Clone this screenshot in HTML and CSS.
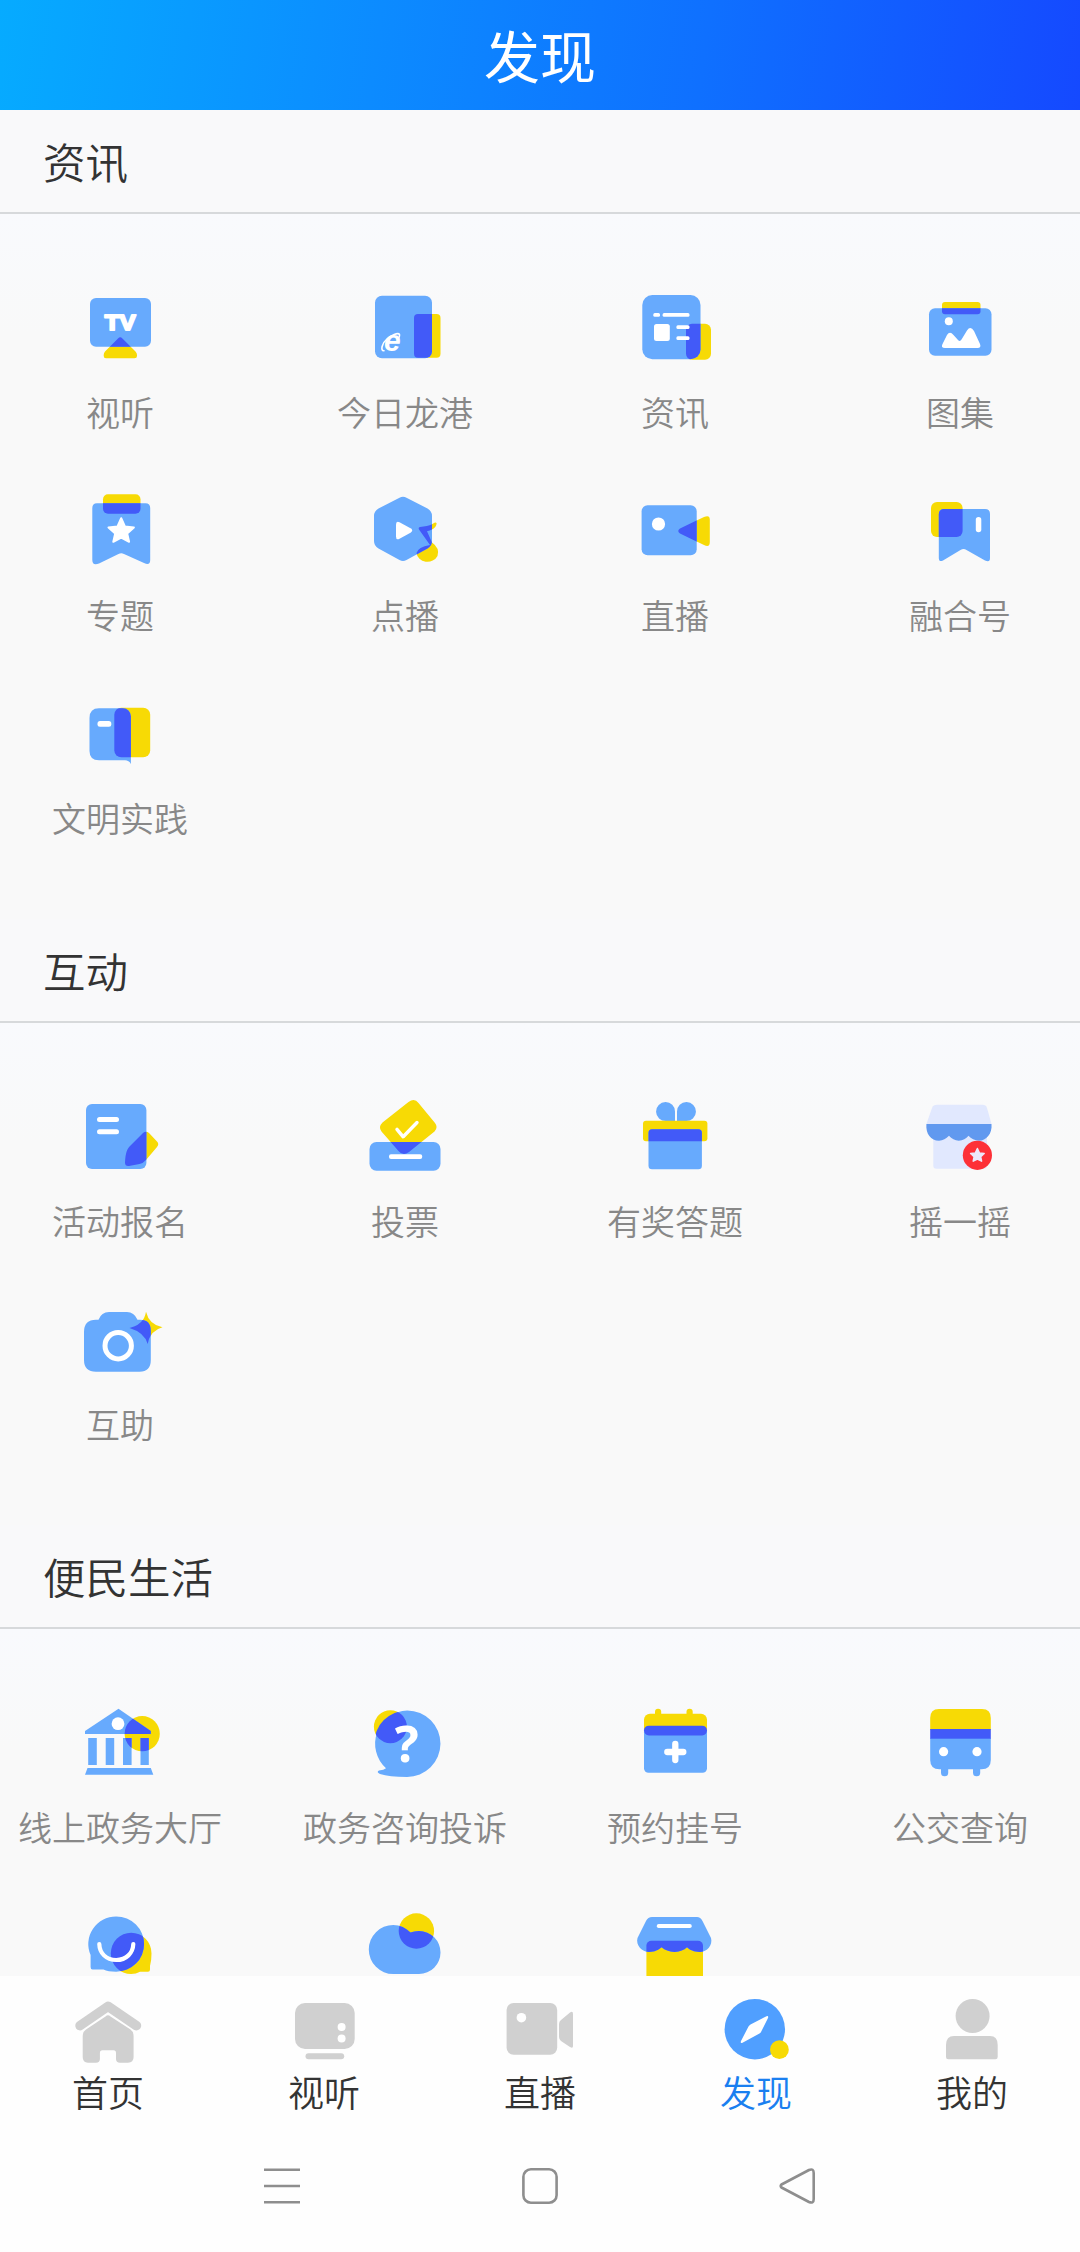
FILE: index.html
```html
<!DOCTYPE html>
<html lang="zh-CN">
<head>
<meta charset="utf-8">
<title>发现</title>
<link rel="stylesheet" href="styles.css">
</head>
<body>
<div class="app">
  <header class="header"><h1 class="header-title">发现</h1></header>

  <main class="content">
    <section class="section">
      <h2 class="section-title">资讯</h2>
      <div class="grid">
        <a class="item">
          <svg class="icon" viewBox="0 0 90 90">
            <clipPath id="c-tv"><rect x="15" y="15" width="61" height="48.7" rx="6"/></clipPath>
            <path class="y" d="M43 55.500Q45.200 53 47.400 55.500L60.500 68.500Q62 70 62 72V73Q62 75.300 59.500 75.300H31Q28.700 75.300 28.700 73V72Q28.700 70 30 68.500Z"/>
            <rect class="b" x="15" y="15" width="61" height="48.700" rx="6"/>
            <path class="d" clip-path="url(#c-tv)" d="M43 55.500Q45.200 53 47.400 55.500L60.500 68.500H30Z"/>
            <text class="tv-text" x="45.300" y="46.800" textLength="31" lengthAdjust="spacingAndGlyphs">TV</text>
          </svg>
          <span class="label">视听</span>
        </a>
        <a class="item">
          <svg class="icon" viewBox="0 0 90 90">
            <clipPath id="c-day"><rect x="15" y="12.700" width="57" height="62.600" rx="7"/></clipPath>
            <rect class="y" x="54" y="31" width="26.500" height="43.700" rx="4"/>
            <rect class="b" x="15" y="12.700" width="57" height="62.600" rx="7"/>
            <rect class="d" clip-path="url(#c-day)" x="54" y="31" width="26.500" height="43.700" rx="4"/>
            <text class="e-text" x="32.300" y="67.800">e</text>
            <path class="w-line thin" d="M24 67.800C20 68 22 60 27 56C31 52.500 38 49 39.500 51.500Q40 53 38.500 55.500"/>
          </svg>
          <span class="label">今日龙港</span>
        </a>
        <a class="item">
          <svg class="icon" viewBox="0 0 90 90">
            <clipPath id="c-news"><rect x="12.300" y="12" width="58.200" height="64.300" rx="10"/></clipPath>
            <rect class="y" x="56" y="40.700" width="25" height="36" rx="6"/>
            <rect class="b" x="12.300" y="12" width="58.200" height="64.300" rx="10"/>
            <rect class="d" clip-path="url(#c-news)" x="56" y="40.700" width="25" height="36" rx="6"/>
            <rect class="w" x="23.300" y="30" width="6.700" height="3.700" rx="1.500"/>
            <rect class="w" x="32.600" y="30" width="26.900" height="3.700" rx="1.500"/>
            <rect class="w" x="24" y="41" width="15.800" height="17" rx="2.500"/>
            <rect class="w" x="46.400" y="42.300" width="13.100" height="3.700" rx="1.500"/>
            <rect class="w" x="46.400" y="53.200" width="13.100" height="3.700" rx="1.500"/>
          </svg>
          <span class="label">资讯</span>
        </a>
        <a class="item">
          <svg class="icon" viewBox="0 0 90 90">
            <clipPath id="c-pic"><rect x="14" y="25.300" width="62.500" height="47.400" rx="6"/></clipPath>
            <rect class="y" x="27" y="19" width="38.500" height="12.300" rx="3"/>
            <rect class="b" x="14" y="25.300" width="62.500" height="47.400" rx="6"/>
            <rect class="d" clip-path="url(#c-pic)" x="27" y="19" width="38.500" height="12.300" rx="3"/>
            <circle class="w" cx="33.800" cy="38.300" r="4"/>
            <path class="w" d="M30 65Q25.500 65 27.500 61L32 52Q34.800 47.500 38.500 52L43 57Q45 59 46.500 56.500L52 47.500Q55.500 42.500 59 48L65 61Q66.500 65 62.500 65Z"/>
          </svg>
          <span class="label">图集</span>
        </a>
        <a class="item">
          <svg class="icon" viewBox="0 0 90 90">
            <clipPath id="c-topic"><rect x="17.300" y="17.300" width="57.900" height="60" rx="5"/></clipPath>
            <rect class="y" x="28" y="8.300" width="37.500" height="19.400" rx="5"/>
            <path class="b" d="M22 17.300H70.500Q75.200 17.300 75.200 22V74Q75.200 80 69 77L49 68Q46.200 66.500 43.500 68L24 77.500Q17.300 80 17.300 74V22Q17.300 17.300 22 17.300Z"/>
            <rect class="d" clip-path="url(#c-topic)" x="28" y="8.300" width="37.500" height="19.400" rx="5"/>
            <path class="w round" d="M46.200 32.200L49.900 40.500L58.900 41.400L52.200 47.500L54.100 55.800L46.200 51.600L38.300 55.800L40.200 47.500L33.500 41.400L42.500 40.500Z"/>
          </svg>
          <span class="label">专题</span>
        </a>
        <a class="item">
          <svg class="icon" viewBox="0 0 90 90">
            <clipPath id="c-hex"><path d="M39.500 11.700Q43 9.700 46.500 11.700L67.500 22.500Q72 25 72 30V55Q72 60 67.500 62.500L46.500 74Q43 76 39.500 74L18.500 62.500Q14 60 14 55V30Q14 25 18.500 22.500Z"/></clipPath>
            <path class="y" d="M60 41Q70 40 74.500 36.800Q77.500 35.500 76.300 39Q75 43.500 67 45.300L72 56.500Q80 62 77.500 70A11 9.700 0 0 1 56.500 67Q58 61 70 59L59 43.500Q58 41.500 60 41Z"/>
            <path class="b" d="M39.500 11.700Q43 9.700 46.500 11.700L67.500 22.500Q72 25 72 30V55Q72 60 67.500 62.500L46.500 74Q43 76 39.500 74L18.500 62.500Q14 60 14 55V30Q14 25 18.500 22.500Z"/>
            <path class="d" clip-path="url(#c-hex)" d="M60 41Q70 40 74.500 36.800Q77.500 35.500 76.300 39Q75 43.500 67 45.300L72 56.500Q80 62 77.500 70A11 9.700 0 0 1 56.500 67Q58 61 70 59L59 43.500Q58 41.500 60 41Z"/>
            <path class="w" d="M36 38.500Q36 34.500 39.500 36.200L50.500 42.300Q54 44.500 50.500 46.700L39.500 52.800Q36 54.500 36 50.500Z"/>
          </svg>
          <span class="label">点播</span>
        </a>
        <a class="item">
          <svg class="icon" viewBox="0 0 90 90">
            <clipPath id="c-live"><rect x="11.600" y="19.300" width="55.100" height="50" rx="6"/></clipPath>
            <path class="y" d="M50 42.500L74 31Q79.800 28.500 79.800 33.500V56Q79.800 62 74 59L50 47.500Q46.500 45 50 42.500Z"/>
            <rect class="b" x="11.600" y="19.300" width="55.100" height="50" rx="6"/>
            <path class="d" clip-path="url(#c-live)" d="M50 42.500L74 31Q79.800 28.500 79.800 33.500V56Q79.800 62 74 59L50 47.500Q46.500 45 50 42.500Z"/>
            <circle class="w" cx="28.500" cy="38" r="6.600"/>
          </svg>
          <span class="label">直播</span>
        </a>
        <a class="item">
          <svg class="icon" viewBox="0 0 90 90">
            <clipPath id="c-merge"><rect x="23.800" y="23" width="51.200" height="52" rx="5"/></clipPath>
            <rect class="y" x="16" y="16" width="31.600" height="35" rx="6"/>
            <path class="b" d="M29 23H70Q75 23 75 28V72Q75 77 70 74.500L51.500 64Q48.600 62 45.500 64L28 74.500Q23.800 76.500 23.800 72V28Q23.800 23 29 23Z"/>
            <rect class="d" clip-path="url(#c-merge)" x="16" y="16" width="31.600" height="35" rx="6"/>
            <rect class="w" x="60.800" y="31" width="5.500" height="15.300" rx="2.700"/>
          </svg>
          <span class="label">融合号</span>
        </a>
        <a class="item">
          <svg class="icon" viewBox="0 0 90 90">
            <clipPath id="c-book"><rect x="14.500" y="19.300" width="41.400" height="56" rx="8"/></clipPath>
            <rect class="y" x="39.300" y="18.700" width="35.900" height="49.600" rx="7"/>
            <path class="b" d="M24 19.300H47Q55.900 19.300 55.900 28V75Q54 71.300 50 71.300H24Q14.500 71.300 14.500 62V29Q14.500 19.300 24 19.300Z"/>
            <rect class="d" clip-path="url(#c-book)" x="39.300" y="18.700" width="35.900" height="49.600" rx="7"/>
            <rect class="w" x="22.500" y="32" width="13.800" height="5.700" rx="2.500"/>
          </svg>
          <span class="label">文明实践</span>
        </a>
      </div>
    </section>

    <section class="section">
      <h2 class="section-title">互动</h2>
      <div class="grid">
        <a class="item">
          <svg class="icon" viewBox="0 0 90 90">
            <clipPath id="c-act"><rect x="11" y="12" width="60.400" height="65" rx="6"/></clipPath>
            <path class="y" d="M68 41Q71 38.500 74 41L82 49.500Q84.500 52 82 55L71 68Q68.500 71 64.500 72L54 74Q50 74.500 50 70.500C50.500 61 52 57 55 54Z"/>
            <rect class="b" x="11" y="12" width="60.400" height="65" rx="6"/>
            <path class="d" clip-path="url(#c-act)" d="M68 41Q71 38.500 74 41L82 49.500Q84.500 52 82 55L71 68Q68.500 71 64.500 72L54 74Q50 74.500 50 70.500C50.500 61 52 57 55 54Z"/>
            <rect class="w" x="22" y="25" width="22" height="5" rx="2.500"/>
            <rect class="w" x="22" y="37.300" width="22" height="5" rx="2.500"/>
          </svg>
          <span class="label">活动报名</span>
        </a>
        <a class="item">
          <svg class="icon" viewBox="0 0 90 90">
            <clipPath id="c-vote"><rect x="9.500" y="50" width="71" height="28.700" rx="7"/></clipPath>
            <path class="y" d="M48.500 10Q54.500 5.500 58.500 11L75 31Q78.500 35.500 74.500 39.500L49 60Q43 64.500 38.500 59L21.500 39.500Q18 35 22.500 30.500Z"/>
            <rect class="b" x="9.500" y="50" width="71" height="28.700" rx="7"/>
            <path class="d" clip-path="url(#c-vote)" d="M48.500 10Q54.500 5.500 58.500 11L75 31Q78.500 35.500 74.500 39.500L49 60Q43 64.500 38.500 59L21.500 39.500Q18 35 22.500 30.500Z"/>
            <path class="w-line check" d="M37 37.300L43.200 44.800L57 30.500"/>
            <rect class="w" x="29" y="62.300" width="33.200" height="4.700" rx="2"/>
          </svg>
          <span class="label">投票</span>
        </a>
        <a class="item">
          <svg class="icon" viewBox="0 0 90 90">
            <path class="b" d="M35.500 10A9.400 9.400 0 0 1 45 19.500V29H36A9.700 9.500 0 0 1 35.500 10Z"/>
            <path class="b" d="M56.500 10A9.400 9.400 0 0 0 47 19.500V29H56A9.700 9.500 0 0 0 56.500 10Z"/>
            <rect class="y" x="13" y="28.800" width="64.400" height="20.500" rx="3"/>
            <rect class="b" x="18.500" y="37.300" width="53.400" height="40" rx="3.500"/>
            <path class="d" d="M18.500 49.300V41Q18.500 37.300 22 37.300H68.400Q71.900 37.300 71.900 41V49.300Z"/>
          </svg>
          <span class="label">有奖答题</span>
        </a>
        <a class="item">
          <svg class="icon" viewBox="0 0 90 90">
            <rect class="pale" x="18.300" y="40" width="53.700" height="36.700" rx="3"/>
            <path class="pale" d="M22 12.700H67.500Q71 12.700 72 16L76.500 32H11.400L17 16Q18.200 12.700 22 12.700Z"/>
            <path class="awning" d="M11.400 32H76.500C77.500 42 71 48.700 64 48.700C60 48.700 56 46.500 53.500 43.800C51 46.500 48 48.700 43.800 48.700C40 48.700 36.500 46.500 34 43.800C31 46.500 28 48.700 24 48.700C16 48.700 10.500 42 11.400 32Z"/>
            <circle class="badge" cx="62.400" cy="63.300" r="14.600"/>
            <path class="star-pale" d="M62.400 56.500L64.500 61L69.200 61.500L65.700 64.800L66.600 69.200L62.400 67L58.200 69.200L59.100 64.800L55.600 61.500L60.300 61Z"/>
          </svg>
          <span class="label">摇一摇</span>
        </a>
        <a class="item">
          <svg class="icon" viewBox="0 0 90 90">
            <clipPath id="c-cam"><path d="M21 24.700H65Q75.800 24.700 75.800 36V76.700H9V37Q9 24.700 21 24.700Z"/></clipPath>
            <path class="y" d="M71 16.700Q74 29.500 87.500 32.300Q75 35.500 72.700 49Q69.500 37.500 54.500 33Q69 29.500 71 16.700Z"/>
            <path class="b" d="M21 24.700H23.500Q26.500 17 34 17H52Q59 17 62.500 24.700H65Q75.800 24.700 75.800 36V65Q75.800 76.700 64.500 76.700H21Q9 76.700 9 65V37Q9 24.700 21 24.700Z"/>
            <path class="d" clip-path="url(#c-cam)" d="M71 16.700Q74 29.500 87.500 32.300Q75 35.500 72.700 49Q69.500 37.500 54.500 33Q69 29.500 71 16.700Z"/>
            <circle class="w-line ring" cx="43.200" cy="50.700" r="13.200"/>
          </svg>
          <span class="label">互助</span>
        </a>
      </div>
    </section>

    <section class="section">
      <h2 class="section-title">便民生活</h2>
      <div class="grid">
        <a class="item">
          <svg class="icon" viewBox="0 0 90 90">
            <clipPath id="c-hall"><circle cx="67.200" cy="35.700" r="17.600"/></clipPath>
            <circle class="y" cx="67.200" cy="35.700" r="17.600"/>
            <path class="b" d="M43.500 10.700L75.800 33V36H10V33ZM13.200 40h8.600v27h-8.600ZM30.700 40h8.500v27h-8.500ZM48 40h8.600v27h-8.600ZM65.500 40h8.300v27h-8.300ZM12.500 70H75.800L78.300 76.700H10Z"/>
            <path class="d" clip-path="url(#c-hall)" d="M43.500 10.700L75.800 33V36H10V33ZM48 40h8.600v27h-8.600ZM65.500 40h8.300v27h-8.300Z"/>
            <circle class="w" cx="43" cy="25.700" r="6.400"/>
          </svg>
          <span class="label">线上政务大厅</span>
        </a>
        <a class="item">
          <svg class="icon" viewBox="0 0 90 90">
            <clipPath id="c-ask"><circle cx="47.300" cy="45.600" r="33.200"/></clipPath>
            <circle class="y" cx="30.400" cy="28.700" r="16.500"/>
            <path class="b" d="M47.300 12.400A33.300 33.300 0 1 1 47 79Q29 79 20 76Q16 74 19 72.500Q24 72 26 70.300A33.300 33.300 0 0 1 47.300 12.400Z"/>
            <circle class="d" clip-path="url(#c-ask)" cx="30.400" cy="28.700" r="16.500"/>
            <text class="q-text" x="46.800" y="64">?</text>
          </svg>
          <span class="label">政务咨询投诉</span>
        </a>
        <a class="item">
          <svg class="icon" viewBox="0 0 90 90">
            <rect class="y" x="25" y="10.700" width="6.200" height="9" rx="3"/>
            <rect class="y" x="56.500" y="10.700" width="6.200" height="9" rx="3"/>
            <rect class="y" x="14" y="15.700" width="63" height="21" rx="6"/>
            <rect class="b" x="14" y="30" width="63" height="44.700" rx="4.500"/>
            <rect class="d" x="14" y="27.700" width="63" height="9.700" rx="4.800"/>
            <path class="w-line plus" d="M45.300 46V62M37.300 54H53.300"/>
          </svg>
          <span class="label">预约挂号</span>
        </a>
        <a class="item">
          <svg class="icon" viewBox="0 0 90 90">
            <rect class="b" x="26" y="66" width="7.200" height="12.300" rx="3.500"/>
            <rect class="b" x="58" y="66" width="7.200" height="12.300" rx="3.500"/>
            <path class="y" d="M15.200 32V20Q15.200 11 24 11H67Q75.800 11 75.800 20V32Z"/>
            <path class="b" d="M15.200 40V62Q15.200 71.300 24.500 71.300H66.500Q75.800 71.300 75.800 62V40Z"/>
            <rect class="d" x="15.200" y="31" width="60.600" height="9.700"/>
            <circle class="w" cx="28.600" cy="53.700" r="4.600"/>
            <circle class="w" cx="62" cy="53.700" r="4.600"/>
          </svg>
          <span class="label">公交查询</span>
        </a>
        <a class="item">
          <svg class="icon" viewBox="0 0 90 90">
            <clipPath id="c-smile"><path d="M41.200 15.500A27.800 27.500 0 0 1 41.200 70.700Q33 70.700 28.500 68.500H17.500Q15.600 68.500 15.600 66V54A27.800 27.500 0 0 1 41.200 15.500Z"/></clipPath>
            <path class="y" d="M56.200 31.700A20.400 20.700 0 0 1 76.500 52.500Q76.500 60 75 65V68.500Q75 70.700 73 70.700H65Q61 73 56.200 73A20.600 20.600 0 0 1 56.200 31.700Z"/>
            <path class="b" d="M41.200 15.500A27.800 27.500 0 0 1 41.200 70.700Q33 70.700 28.500 68.500H17.500Q15.600 68.500 15.600 66V54A27.800 27.500 0 0 1 41.200 15.500Z"/>
            <ellipse class="d" clip-path="url(#c-smile)" cx="56.200" cy="52.400" rx="20.400" ry="20.700"/>
            <path class="w-line smile" d="M24.300 43C24.500 52 31 59 41.200 59S58 52 58.300 43"/>
          </svg>
        </a>
        <a class="item">
          <svg class="icon" viewBox="0 0 90 90">
            <clipPath id="c-cloud"><path d="M33.300 24C40 24 46 27 50.500 31.500Q54 30 59 30A21.500 21.500 0 0 1 59 73H33.300A24.500 24.500 0 0 1 33.300 24Z"/></clipPath>
            <circle class="y" cx="56.400" cy="30" r="17.700"/>
            <path class="b" d="M33.300 24C40 24 46 27 50.500 31.500Q54 30 59 30A21.500 21.500 0 0 1 59 73H33.300A24.500 24.500 0 0 1 33.300 24Z"/>
            <circle class="d" clip-path="url(#c-cloud)" cx="56.400" cy="30" r="17.700"/>
          </svg>
        </a>
        <a class="item">
          <svg class="icon" viewBox="0 0 90 90">
            <clipPath id="c-shop"><rect x="16.400" y="39.700" width="56.600" height="45" rx="5"/></clipPath>
            <rect class="y" x="16.400" y="39.700" width="56.600" height="45" rx="5"/>
            <path class="b" d="M22 16H67Q70.500 16 72.500 20L81 37C83 44 77 51 70 51C64 51 60 49 57 46.300C54 49 50 51 44.500 51C39 51 35 49 31.600 46.300C28 49 25 51 19 51C12 51 5.500 44 7.500 37L16 20Q18 16 22 16Z"/>
            <path class="d" clip-path="url(#c-shop)" d="M22 16H67Q70.500 16 72.500 20L81 37C83 44 77 51 70 51C64 51 60 49 57 46.300C54 49 50 51 44.500 51C39 51 35 49 31.600 46.300C28 49 25 51 19 51C12 51 5.500 44 7.500 37L16 20Q18 16 22 16Z"/>
            <rect class="w" x="26.800" y="23" width="34.900" height="4" rx="1.800"/>
          </svg>
        </a>
      </div>
    </section>
  </main>

  <nav class="tabs">
    <a class="tab">
      <svg class="tab-icon" viewBox="0 0 72 72">
        <path class="roof" d="M8 30.700L36 11.300L64.500 30.700"/>
        <path class="g" d="M33.500 21.500Q36 19 38.500 21.500L58.500 34.500Q61.600 37 61.600 41V62Q61.600 67.700 56 67.700H48Q44 67.700 44 64V58Q44 55.300 41.500 55.300H30.500Q27.900 55.300 27.900 58V64Q27.900 67.700 24 67.700H16Q10.700 67.700 10.700 62V41Q10.700 37 14 34.500Z"/>
      </svg>
      <span class="tab-label">首页</span>
    </a>
    <a class="tab">
      <svg class="tab-icon" viewBox="0 0 72 72">
        <rect class="g" x="7" y="8" width="59.700" height="46" rx="10"/>
        <circle class="w" cx="53.600" cy="32" r="4"/>
        <circle class="w" cx="53.600" cy="43.400" r="4"/>
        <rect class="g" x="17.500" y="58.300" width="38.700" height="6" rx="3"/>
      </svg>
      <span class="tab-label">视听</span>
    </a>
    <a class="tab">
      <svg class="tab-icon" viewBox="0 0 72 72">
        <rect class="g" x="2.600" y="8" width="50.600" height="51.700" rx="7"/>
        <circle class="w" cx="17.400" cy="22.700" r="4.800"/>
        <path class="g" d="M57 25L66 17.500Q69 15.500 69 19V51Q69 54 66 52L57 46Q55 44.500 55 42V29Q55 26.500 57 25Z"/>
      </svg>
      <span class="tab-label">直播</span>
    </a>
    <a class="tab tab-active">
      <svg class="tab-icon" viewBox="0 0 72 72">
        <circle class="compass" cx="34.800" cy="34.200" r="30.200"/>
        <path class="w" d="M46.500 21.300Q48.800 20.500 48 23L41.500 36Q41 37.500 39.500 38.500L22.500 47.700Q20 48.500 21 46L28.500 31.500Q29.200 30.300 30.500 29.500Z"/>
        <circle class="y" cx="59.400" cy="54.700" r="9.400"/>
      </svg>
      <span class="tab-label">发现</span>
    </a>
    <a class="tab">
      <svg class="tab-icon" viewBox="0 0 72 72">
        <circle class="g" cx="36.600" cy="21" r="17"/>
        <path class="g" d="M18 41H54Q61.700 41 61.700 50V62Q61.700 64.300 59.500 64.300H12.300Q10 64.300 10 62V50Q10 41 18 41Z"/>
      </svg>
      <span class="tab-label">我的</span>
    </a>
  </nav>

  <div class="system-nav">
    <svg class="sys-icon" viewBox="0 0 40 40"><path d="M2 3.700H38M2 20H38M2 36.300H38"/></svg>
    <svg class="sys-icon" viewBox="0 0 40 40"><rect x="3.400" y="3.300" width="33.200" height="33.400" rx="7.500"/></svg>
    <svg class="sys-icon" viewBox="0 0 40 40"><path d="M3.500 18.500L31 4Q35.700 2 35.700 7V33Q35.700 38 31 36L3.500 21.500Q2 20 3.500 18.500Z"/></svg>
  </div>
</div>
</body>
</html>
```
FILE: styles.css
```css
* {
  box-sizing: border-box;
}

body {
  margin: 0;
  background: #fefefe;
  font-family: "Noto Sans CJK SC", "Noto Sans", sans-serif;
  font-weight: 350;
}

.app {
  display: flex;
  flex-direction: column;
  width: 1080px;
  height: 2252px;
  overflow: hidden;
}

.header {
  display: flex;
  flex: none;
  align-items: center;
  justify-content: center;
  height: 110px;
  background: linear-gradient(98deg, #06abff 0%, #0c8bff 35%, #0f70ff 65%, #1549ff 100%);
}

.header-title {
  margin: 0 0 2px;
  color: #fff;
  font-size: 56px;
  font-weight: 400;
  line-height: 80px;
}

.content {
  flex: 1;
  min-height: 0;
  overflow: hidden;
  background: #f9f9fa;
}

.section-title {
  height: 104px;
  margin: 0;
  padding: 21px 0 0 43px;
  border-bottom: 2px solid #d7d9db;
  color: #333;
  font-size: 42.5px;
  font-weight: 350;
  line-height: 60px;
}

.grid {
  display: grid;
  grid-template-columns: 240px 330px 210px 300px;
  grid-auto-rows: 203px;
  padding: 48px 0;
  background: linear-gradient(#f9fafd, #f9f9f9 120px);
}

.item {
  display: flex;
  flex-direction: column;
  align-items: center;
  gap: 19px;
  padding-top: 21px;
}

.item:nth-child(4n) {
  padding-left: 60px;
}

.icon {
  flex: none;
  width: 90px;
  height: 90px;
}

.label {
  color: #888;
  font-size: 34px;
  line-height: 40px;
  white-space: nowrap;
}

.b { fill: #67aafd; }
.y { fill: #f7da05; }
.d { fill: #425af8; }
.w { fill: #fff; }
.g { fill: #d0d0d0; }
.pale { fill: #e1e8fe; }
.awning { fill: #6199ef; }
.badge { fill: #fd3037; }
.compass { fill: #509fff; }

.star-pale {
  fill: #ece8fb;
  stroke: #ece8fb;
  stroke-width: 1.5;
  stroke-linejoin: round;
}

.round {
  stroke: #fff;
  stroke-width: 2;
  stroke-linejoin: round;
}

.w-line {
  fill: none;
  stroke: #fff;
  stroke-linecap: round;
  stroke-linejoin: round;
}

.thin { stroke-width: 1.6; }
.check { stroke-width: 3.4; }
.ring { stroke-width: 5; }
.plus { stroke-width: 6.3; }
.smile { stroke-width: 4.2; }

.roof {
  fill: none;
  stroke: #d0d0d0;
  stroke-width: 9.5;
  stroke-linecap: round;
  stroke-linejoin: round;
}

.tv-text,
.e-text,
.q-text {
  fill: #fff;
  text-anchor: middle;
}

.tv-text {
  font: 700 22px "Liberation Sans", sans-serif;
  stroke: #fff;
  stroke-width: 2;
  stroke-linejoin: round;
}

.e-text {
  font: italic 700 30px "Liberation Sans", sans-serif;
}

.q-text {
  font: 700 50px "Noto Sans", sans-serif;
}

.tabs {
  display: flex;
  flex: none;
  height: 144px;
  background: #fefefe;
}

.tab {
  display: flex;
  flex: 1;
  flex-direction: column;
  align-items: center;
  gap: 4px;
  padding-top: 19px;
  color: #333;
}

.tab-active {
  color: #1a7ff0;
}

.tab-icon {
  flex: none;
  width: 72px;
  height: 72px;
}

.tab-label {
  font-size: 36px;
  line-height: 40px;
}

.system-nav {
  display: flex;
  flex: none;
  align-items: center;
  justify-content: center;
  gap: 218px;
  height: 132px;
}

.sys-icon {
  width: 40px;
  height: 40px;
  fill: none;
  stroke: #8e8e8e;
  stroke-width: 2.6;
  stroke-linejoin: round;
}
```
